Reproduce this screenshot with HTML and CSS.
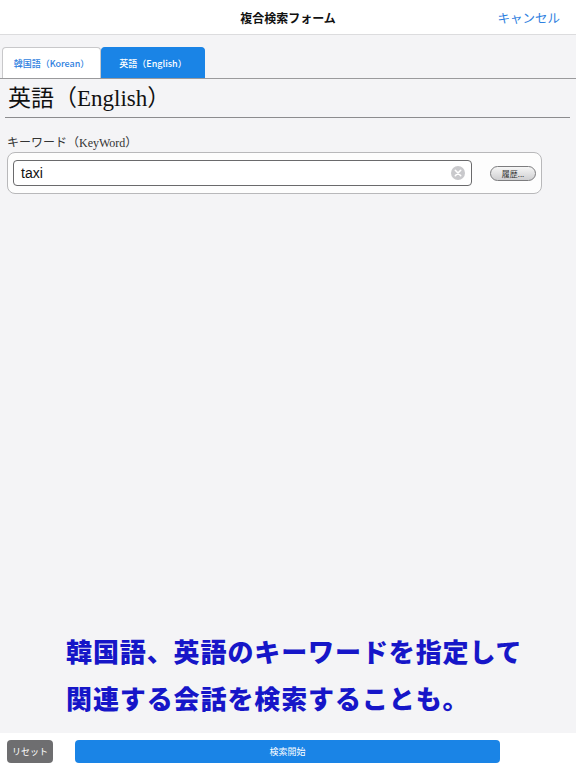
FILE: index.html
```html
<!DOCTYPE html>
<html lang="ja">
<head>
  <meta charset="UTF-8">
  <meta name="viewport" content="width=device-width, initial-scale=1.0">
  <title>複合検索フォーム</title>
  <link rel="stylesheet" href="styles.css">
</head>
<body>
  <div class="app">
    <header class="navbar">
      <div class="nav-title">複合検索フォーム</div>
      <a class="nav-cancel" href="#">キャンセル</a>
    </header>

    <main class="content">
      <div class="tabs">
        <div class="tab">韓国語（Korean）</div>
        <div class="tab active">英語（English）</div>
      </div>

      <section class="panel">
        <h1 class="section-title">英語（English）</h1>
        <div class="field-label">キーワード（KeyWord）</div>
        <div class="field-box">
          <div class="input-wrap">
            <span class="input-text">taxi</span>
            <span class="clear-btn">
              <svg width="14" height="14" viewBox="0 0 14 14">
                <circle cx="7" cy="7" r="7" fill="#c9c9cc"/>
                <path d="M4.3 4.3 L9.7 9.7 M9.7 4.3 L4.3 9.7" stroke="#fff" stroke-width="1.6" stroke-linecap="round"/>
              </svg>
            </span>
          </div>
          <button class="history-btn">履歴...</button>
        </div>
      </section>

      <div class="caption">
        <p>韓国語、英語のキーワードを指定して</p>
        <p>関連する会話を検索することも。</p>
      </div>
    </main>

    <footer class="toolbar">
      <button class="reset-btn">リセット</button>
      <button class="search-btn">検索開始</button>
    </footer>
  </div>
</body>
</html>
```

FILE: styles.css
```css
* {
  margin: 0;
  padding: 0;
  box-sizing: border-box;
}

body {
  font-family: 'Noto Sans CJK JP', sans-serif;
  background: #f4f4f6;
  width: 576px;
  height: 768px;
  overflow: hidden;
}

.app {
  display: flex;
  flex-direction: column;
  height: 768px;
}

.navbar {
  height: 35px;
  background: #ffffff;
  border-bottom: 1px solid #dcdcde;
  display: flex;
  align-items: center;
  justify-content: center;
  position: relative;
}

.nav-title {
  font-size: 12px;
  font-weight: 700;
  color: #111;
}

.nav-cancel {
  position: absolute;
  right: 16px;
  top: 8px;
  font-size: 12.5px;
  color: #2f7fe0;
  text-decoration: none;
}

.content {
  flex: 1;
  display: flex;
  flex-direction: column;
}

.tabs {
  display: flex;
  padding: 12px 0 0 2px;
  border-bottom: 1px solid #9a9a9c;
}

.tab {
  height: 31px;
  display: flex;
  align-items: center;
  justify-content: center;
  font-size: 9px;
  font-weight: 500;
  color: #2f7fe0;
  background: #ffffff;
  border: 1px solid #c8c8ca;
  border-bottom: none;
  border-radius: 4px 4px 0 0;
  width: 99px;
}

.tab.active {
  width: 104px;
  background: #1a84e6;
  border-color: #1a84e6;
  color: #ffffff;
}

.panel {
  padding: 0 6px 0 5px;
}

.section-title {
  font-family: 'Liberation Serif', 'Noto Sans CJK JP', serif;
  font-size: 23px;
  font-weight: 400;
  color: #111;
  padding: 6px 0 4px 3px;
  border-bottom: 1px solid #8c8c8e;
  line-height: 28px;
}

.field-label {
  font-family: 'Liberation Serif', 'Noto Sans CJK JP', serif;
  font-size: 12px;
  color: #333;
  margin: 15px 0 1px 2px;
}

.field-box {
  width: 535px;
  height: 42px;
  margin-left: 2px;
  background: #fdfdfd;
  border: 1px solid #b8b8ba;
  border-radius: 8px;
  display: flex;
  align-items: center;
  padding: 0 5px 0 5px;
}

.input-wrap {
  width: 459px;
  height: 26px;
  background: #ffffff;
  border: 1px solid #6a6a6c;
  border-radius: 4px;
  display: flex;
  align-items: center;
  justify-content: space-between;
  padding: 0 6px 0 7px;
}

.input-text {
  font-family: 'Liberation Sans', Arial, sans-serif;
  font-size: 14px;
  color: #111;
}

.clear-btn {
  display: flex;
}

.history-btn {
  margin-left: 18px;
  width: 46px;
  height: 15px;
  border-radius: 8px;
  border: 1px solid #7c7c7e;
  background: linear-gradient(#f6f6f6, #cfcfd1);
  font-family: 'Noto Sans CJK JP', sans-serif;
  font-size: 8px;
  color: #333;
  line-height: 13px;
}

.caption {
  margin-top: auto;
  padding: 0 0 12px 66px;
}

.caption p {
  font-size: 26px;
  font-weight: 900;
  color: #1616c8;
  line-height: 47px;
  letter-spacing: 0.9px;
}

.toolbar {
  height: 35px;
  background: #ffffff;
  display: flex;
  align-items: flex-start;
  padding: 7px 0 0 7px;
}

.reset-btn {
  width: 46px;
  height: 23px;
  border: none;
  border-radius: 4px;
  background: #6e6e70;
  color: #ffffff;
  font-family: 'Noto Sans CJK JP', sans-serif;
  font-size: 9px;
}

.search-btn {
  margin-left: 22px;
  width: 425px;
  height: 23px;
  border: none;
  border-radius: 4px;
  background: #1a84e6;
  color: #ffffff;
  font-family: 'Noto Sans CJK JP', sans-serif;
  font-size: 9px;
}
```
